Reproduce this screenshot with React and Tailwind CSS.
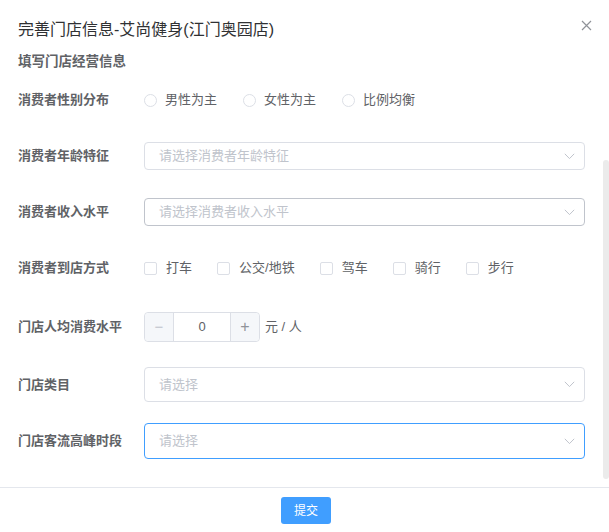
import React from "react";

const font = { fontFamily: '"Liberation Sans", "Noto Sans CJK SC", sans-serif' };

const Chevron = () => (
  <svg width="11" height="7" viewBox="0 0 11 7" fill="none">
    <path d="M0.8 0.8 L5.5 5.6 L10.2 0.8" stroke="#c0c4cc" strokeWidth="1" />
  </svg>
);

const Label = ({ children }) => (
  <div className="w-[126px] shrink-0 text-[13px] font-bold text-[#606266]">{children}</div>
);

const Select = ({ placeholder, height, border }) => (
  <div
    className={`flex flex-1 items-center justify-between rounded-[4px] border bg-white pl-[14px] pr-[9px] ${height} ${border}`}
  >
    <span className="text-[13px] text-[#c0c4cc]">{placeholder}</span>
    <Chevron />
  </div>
);

const Radio = ({ label }) => (
  <div className="mr-[26px] flex items-center">
    <span className="h-[13px] w-[13px] rounded-full border border-[#dcdfe6] bg-white" />
    <span className="ml-[8px] text-[13px] text-[#606266]">{label}</span>
  </div>
);

const Check = ({ label }) => (
  <div className="mr-[25px] flex items-center">
    <span className="h-[13px] w-[13px] rounded-[2px] border border-[#dcdfe6] bg-white" />
    <span className="ml-[9px] text-[13px] text-[#606266]">{label}</span>
  </div>
);

export default function App() {
  return (
    <div className="relative flex h-[532px] w-[609px] flex-col overflow-hidden bg-white" style={font}>
      {/* header */}
      <div className="pl-[18px] pt-[17px]">
        <div className="h-[25px] text-[16px] leading-[25px] text-[#303133]">完善门店信息-艾尚健身(江门奥园店)</div>
      </div>
      <button className="absolute right-[17px] top-[20px]">
        <svg width="11" height="11" viewBox="0 0 11 11">
          <path d="M1 1 L10 10 M10 1 L1 10" stroke="#909399" strokeWidth="1.2" />
        </svg>
      </button>

      {/* body */}
      <div className="flex flex-1 flex-col pl-[18px] pr-[24px]">
        <div className="mt-[10px] h-[20px] text-[13.5px] font-bold leading-[20px] text-[#606266]">填写门店经营信息</div>

        <div className="mt-[14px] flex h-[28px] items-center">
          <Label>消费者性别分布</Label>
          <Radio label="男性为主" />
          <Radio label="女性为主" />
          <Radio label="比例均衡" />
        </div>

        <div className="mt-[28px] flex h-[28px] items-center">
          <Label>消费者年龄特征</Label>
          <Select placeholder="请选择消费者年龄特征" height="h-[28px]" border="border-[#dcdfe6]" />
        </div>

        <div className="mt-[28px] flex h-[28px] items-center">
          <Label>消费者收入水平</Label>
          <Select placeholder="请选择消费者收入水平" height="h-[28px]" border="border-[#c0c4cc]" />
        </div>

        <div className="mt-[28px] flex h-[28px] items-center">
          <Label>消费者到店方式</Label>
          <Check label="打车" />
          <Check label="公交/地铁" />
          <Check label="驾车" />
          <Check label="骑行" />
          <Check label="步行" />
        </div>

        <div className="mt-[30px] flex h-[30px] items-center">
          <Label>门店人均消费水平</Label>
          <div className="flex h-[30px] w-[116px] rounded-[4px] border border-[#dcdfe6]">
            <div className="flex w-[29px] items-center justify-center rounded-l-[4px] border-r border-[#dcdfe6] bg-[#f5f7fa] text-[15px] text-[#c0c4cc]">
              −
            </div>
            <div className="flex flex-1 items-center justify-center text-[13px] text-[#606266]">0</div>
            <div className="flex w-[29px] items-center justify-center rounded-r-[4px] border-l border-[#dcdfe6] bg-[#f5f7fa] text-[16px] text-[#909399]">
              +
            </div>
          </div>
          <span className="ml-[5px] text-[13px] text-[#606266]">元 / 人</span>
        </div>

        <div className="mt-[25px] flex h-[35px] items-center">
          <Label>门店类目</Label>
          <Select placeholder="请选择" height="h-[35px]" border="border-[#dcdfe6]" />
        </div>

        <div className="mt-[21px] flex h-[36px] items-center">
          <Label>门店客流高峰时段</Label>
          <Select placeholder="请选择" height="h-[36px]" border="border-[#409eff]" />
        </div>
      </div>

      {/* footer */}
      <div className="flex justify-center border-t border-[#e4e7ed] pb-[8px] pl-[3px] pt-[9px]">
        <button className="h-[27px] w-[50px] rounded-[3px] bg-[#409eff] text-[12px] text-white">提交</button>
      </div>

      {/* scrollbar thumb */}
      <div className="absolute right-0 top-[160px] h-[319px] w-[6px] rounded-[3px] bg-[#ebebeb]" />
    </div>
  );
}
